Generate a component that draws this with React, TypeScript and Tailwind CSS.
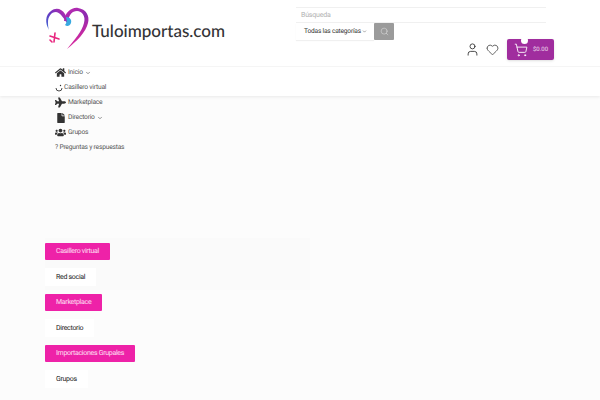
import { ChevronDown, Heart, Search, ShoppingCart, User } from 'lucide-react';
import { FaHome, FaPlane, FaFile, FaUsers } from 'react-icons/fa';

const sections = [
  { title: 'Casillero virtual', link: 'Red social' },
  { title: 'Marketplace', link: 'Directorio' },
  { title: 'Importaciones Grupales', link: 'Grupos' },
];

function Logo() {
  return (
    <div className="flex items-start">
      <svg width="45" height="44" viewBox="0 0 45 44" fill="none" className="mt-[7px] shrink-0">
        <defs>
          <linearGradient id="heartL" x1="0" y1="1" x2="1" y2="0">
            <stop offset="0" stopColor="#3b6fd6" />
            <stop offset="0.5" stopColor="#6a35c0" />
            <stop offset="1" stopColor="#c92aa8" />
          </linearGradient>
          <linearGradient id="heartR" x1="0" y1="0" x2="0.4" y2="1">
            <stop offset="0" stopColor="#c92ab0" />
            <stop offset="0.45" stopColor="#8a2bb0" />
            <stop offset="1" stopColor="#e8289a" />
          </linearGradient>
        </defs>
        <path d="M4 23C0 16 0 8 6 4C11 0 17 2 20 7C22 10 22 13 22 16C19 12 16 6 11 5C6 5 3 10 3 15C3 18 3 20 4 23Z" fill="url(#heartL)" />
        <path d="M19 14C20 5 27 0 33 1C41 2 45 9 43 16C41 25 32 34 22 42C29 33 37 25 39 16C41 9 37 4 32 4C27 4 24 8 23 14Z" fill="url(#heartR)" />
        <path d="M21 10C25 10 27 13 26 16C25 19 22 20 20 18C22 16 22 13 21 10Z" fill="#38a9e0" />
        <path d="M5 29L14 32M10 26L9 35M5 33L7 35" stroke="#e8267f" strokeWidth="1.6" strokeLinecap="round" />
      </svg>
      <span className="mt-[18px] ml-[2px] font-['Lato',sans-serif] text-[17px] leading-[26px] font-medium text-[#333335]">
        Tuloimportas.com
      </span>
    </div>
  );
}

function SearchBox() {
  return (
    <div className="w-[250px] left-[296px] absolute top-[7px]">
      <div className="h-[16px] border-y border-[#f0f0f0] bg-white pl-[5px] text-[7px] tracking-[-0.2px] leading-[14px] text-[#b0b0b0]">Búsqueda</div>
      <div className="flex h-[17px]">
        <div className="w-[78px] flex items-center justify-between pl-[8px] pr-[7px] text-[6.6px] tracking-[-0.2px] text-[#333333] whitespace-nowrap shadow-[0_1px_1px_#f0f0f0]">
          <span>Todas las categorías</span>
          <ChevronDown size={5} />
        </div>
        <div className="w-[20px] bg-[#9b9b9b] rounded-[1px] flex items-center justify-center">
          <Search size={9} strokeWidth={1.2} className="text-white/80" />
        </div>
      </div>
    </div>
  );
}

function SmileMark() {
  return (
    <svg width="8" height="8" viewBox="0 0 8 8" fill="none" className="mr-[1px] text-[#333333]">
      <path d="M1 4A3 3 0 0 0 7 4" stroke="currentColor" strokeWidth="0.9" />
      <circle cx="5.5" cy="1.5" r="0.7" fill="currentColor" />
    </svg>
  );
}

export default function App() {
  return (
    <div className="min-h-[400px] bg-[#fcfcfc] font-['Roboto',sans-serif] [text-rendering:geometricPrecision] relative overflow-hidden">
      <header className="h-[66px] bg-white pl-[45px] relative">
        <Logo />
      </header>
      <SearchBox />
      <div className="absolute top-[39px] left-[465px] flex items-center">
        <User size={15} strokeWidth={1.4} className="text-[#333333]" />
        <Heart size={13} strokeWidth={1.4} className="text-[#333333] ml-[6px] mr-[8px]" />
        <div className="relative flex items-center w-[47px] h-[21px] bg-[#a02d9e] rounded-[2px] text-white shadow-sm">
          <ShoppingCart size={14} strokeWidth={1.5} className="ml-[7px]" />
          <span className="ml-[5px] text-[6px] text-white/80">$0.00</span>
          <span className="absolute -top-[2px] left-[14px] w-[7px] h-[7px] rounded-full bg-white" />
        </div>
      </div>

      <nav className="h-[30px] bg-white border-t border-[#f5f5f5] shadow-[0_1px_3px_rgba(0,0,0,0.08)] pl-[55px] text-[6.7px] tracking-[-0.22px] text-[#555555]">
        <ul className="flex flex-col -mt-[2px]">
          <li className="h-[15px] flex items-center"><FaHome size={11} className="text-[#333333] mr-[2px]" />Inicio<ChevronDown size={6} strokeWidth={2.5} className="ml-[2px]" /></li>
          <li className="h-[15px] flex items-center"><SmileMark />Casillero virtual</li>
          <li className="h-[15px] flex items-center"><FaPlane size={11} className="text-[#333333] mr-[2px]" />Marketplace</li>
          <li className="h-[15px] flex items-center"><FaFile size={10} className="text-[#333333] ml-[1px] mr-[2px]" />Directorio<ChevronDown size={6} strokeWidth={2.5} className="ml-[2px]" /></li>
          <li className="h-[15px] flex items-center"><FaUsers size={11} className="text-[#333333] mr-[2px]" />Grupos</li>
          <li className="h-[15px] flex items-center">? Preguntas y respuestas</li>
        </ul>
      </nav>

      <main className="mt-[142px] pl-[45px]">
        {sections.map((s, i) => (
          <section key={s.title} className={i === 0 ? 'w-[265px] bg-[#fafafa] pt-[5px] pb-[4px]' : 'pt-[4px] pb-[4px]'}>
            <div className="h-[17px] w-fit px-[11px] bg-[#ee22a8] rounded-[1px] text-white/85 text-[7px] tracking-[-0.3px] leading-[17px]">{s.title}</div>
            <div className="h-[18px] mt-[8px] w-fit px-[11px] bg-white text-[#222222] text-[7px] tracking-[-0.3px] leading-[18px]">{s.link}</div>
          </section>
        ))}
      </main>
    </div>
  );
}
